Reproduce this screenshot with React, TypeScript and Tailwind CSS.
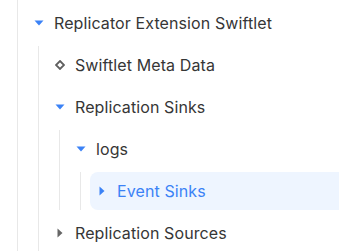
type Node = {
  label: string;
  kind: "open" | "closed" | "leaf";
  active?: boolean;
  children?: Node[];
};

const tree: Node[] = [
  {
    label: "Replicator Extension Swiftlet",
    kind: "open",
    children: [
      { label: "Swiftlet Meta Data", kind: "leaf" },
      {
        label: "Replication Sinks",
        kind: "open",
        children: [
          {
            label: "logs",
            kind: "open",
            children: [{ label: "Event Sinks", kind: "closed", active: true }],
          },
        ],
      },
      { label: "Replication Sources", kind: "closed" },
    ],
  },
];

function Icon({ kind, active }: { kind: Node["kind"]; active?: boolean }) {
  if (kind === "leaf") {
    return (
      <svg width="10" height="10" viewBox="0 0 10 10">
        <path d="M5 1 L9 5 L5 9 L1 5 Z" fill="none" stroke="#5f5f5f" strokeWidth="1.8" />
      </svg>
    );
  }
  if (kind === "open") {
    return (
      <svg width="10" height="6" viewBox="0 0 10 6">
        <path d="M0.5 0.5 H9.5 L5 5.5 Z" fill="#3b82f6" />
      </svg>
    );
  }
  return (
    <svg width="6" height="10" viewBox="0 0 6 10">
      <path d="M0.5 0.5 V9.5 L5.5 5 Z" fill={active ? "#3b82f6" : "#666666"} />
    </svg>
  );
}

function TreeNode({ node }: { node: Node }) {
  return (
    <div className="flex flex-col gap-1">
      <div
        className={`flex items-center h-[38px] pl-[6px] rounded-l-lg ${
          node.active ? "bg-[#eef5ff] text-[#3b82f6]" : "text-[#363636]"
        }`}
      >
        <span className="w-3 flex items-center justify-center shrink-0">
          <Icon kind={node.kind} active={node.active} />
        </span>
        <span className="ml-[9px] whitespace-nowrap tracking-[0.1px]">{node.label}</span>
      </div>
      {node.children && (
        <div className="ml-[11px] border-l border-[#e8e8e8] pl-[9px] flex flex-col gap-1">
          {node.children.map((c) => (
            <TreeNode key={c.label} node={c} />
          ))}
        </div>
      )}
    </div>
  );
}

export default function App() {
  return (
    <div
      className="w-[339px] h-[251px] overflow-hidden bg-white text-[16px]"
      style={{ fontFamily: "Inter, 'Noto Sans', sans-serif" }}
    >
      <div className="ml-[17px] w-[360px] h-full border-l border-[#e8e8e8] pl-[9px] pt-1 flex flex-col gap-1">
        {tree.map((n) => (
          <TreeNode key={n.label} node={n} />
        ))}
      </div>
    </div>
  );
}
